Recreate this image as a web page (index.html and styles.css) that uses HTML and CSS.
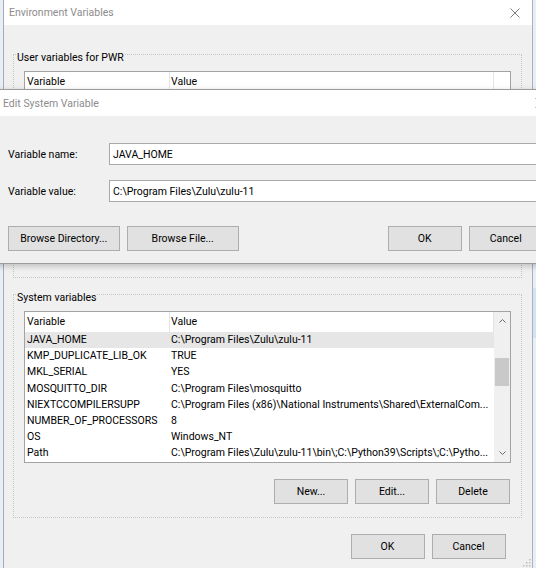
FILE: index.html
```html
<!DOCTYPE html>
<html lang="en">
<head>
<meta charset="utf-8">
<title>Environment Variables</title>
<link rel="stylesheet" href="styles.css">
</head>
<body>
<div class="desktop">
  <div class="side-block"></div>
  <section class="win env">
    <header class="titlebar">
      <span class="title">Environment Variables</span>
      <svg class="close" width="10" height="10" viewBox="0 0 10 10"><path d="M0.5 0.5 L9.5 9.5 M9.5 0.5 L0.5 9.5" stroke="#7a7a7a" stroke-width="1" fill="none"/></svg>
    </header>
    <div class="client">
      <fieldset class="group user-group">
        <legend>User variables for PWR</legend>
        <div class="list user-list">
          <div class="rows">
            <div class="list-head"><span class="c1">Variable</span><span class="c2">Value</span></div>
          </div>
        </div>
        <div class="btn-row">
          <button class="btn">New...</button><button class="btn">Edit...</button><button class="btn">Delete</button>
        </div>
      </fieldset>
      <fieldset class="group sys-group">
        <legend>System variables</legend>
        <div class="list sys-list">
          <div class="rows">
            <div class="list-head"><span class="c1">Variable</span><span class="c2">Value</span></div>
            <div class="row sel"><span class="c1">JAVA_HOME</span><span class="c2">C:\Program Files\Zulu\zulu-11</span></div>
            <div class="row"><span class="c1">KMP_DUPLICATE_LIB_OK</span><span class="c2">TRUE</span></div>
            <div class="row"><span class="c1">MKL_SERIAL</span><span class="c2">YES</span></div>
            <div class="row"><span class="c1">MOSQUITTO_DIR</span><span class="c2">C:\Program Files\mosquitto</span></div>
            <div class="row"><span class="c1">NIEXTCCOMPILERSUPP</span><span class="c2">C:\Program Files (x86)\National Instruments\Shared\ExternalCom...</span></div>
            <div class="row"><span class="c1">NUMBER_OF_PROCESSORS</span><span class="c2">8</span></div>
            <div class="row"><span class="c1">OS</span><span class="c2">Windows_NT</span></div>
            <div class="row"><span class="c1">Path</span><span class="c2">C:\Program Files\Zulu\zulu-11\bin\;C:\Python39\Scripts\;C:\Pytho...</span></div>
          </div>
          <div class="vscroll">
            <div class="sb-arrow"><svg width="7" height="4" viewBox="0 0 7 4"><polyline points="0.5,3.5 3.5,0.5 6.5,3.5" fill="none" stroke="#6a6a6a" stroke-width="1"/></svg></div>
            <div class="sb-track"><div class="sb-thumb"></div></div>
            <div class="sb-arrow"><svg width="7" height="4" viewBox="0 0 7 4"><polyline points="0.5,0.5 3.5,3.5 6.5,0.5" fill="none" stroke="#6a6a6a" stroke-width="1"/></svg></div>
          </div>
        </div>
        <div class="btn-row">
          <button class="btn">New...</button><button class="btn">Edit...</button><button class="btn">Delete</button>
        </div>
      </fieldset>
      <div class="btn-row dialog-btns">
        <button class="btn">OK</button><button class="btn">Cancel</button>
      </div>
    </div>
    <svg class="grip" width="8" height="8" viewBox="0 0 8 8">
      <rect x="6" y="0" width="1.5" height="1.5" fill="#bdbdbd"/>
      <rect x="3" y="3" width="1.5" height="1.5" fill="#bdbdbd"/>
      <rect x="6" y="3" width="1.5" height="1.5" fill="#bdbdbd"/>
      <rect x="0" y="6" width="1.5" height="1.5" fill="#bdbdbd"/>
      <rect x="3" y="6" width="1.5" height="1.5" fill="#bdbdbd"/>
      <rect x="6" y="6" width="1.5" height="1.5" fill="#bdbdbd"/>
    </svg>
  </section>

  <section class="win edit">
    <header class="titlebar">
      <span class="title">Edit System Variable</span>
      <svg class="close" width="10" height="10" viewBox="0 0 10 10"><path d="M0.5 0.5 L9.5 9.5 M9.5 0.5 L0.5 9.5" stroke="#7a7a7a" stroke-width="1" fill="none"/></svg>
    </header>
    <div class="form">
      <div class="field">
        <label for="vname">Variable name:</label>
        <input id="vname" class="input" type="text" value="JAVA_HOME">
      </div>
      <div class="field">
        <label for="vvalue">Variable value:</label>
        <input id="vvalue" class="input" type="text" value="C:\Program Files\Zulu\zulu-11">
      </div>
      <div class="edit-btns">
        <div class="grp">
          <button class="btn wide">Browse Directory...</button>
          <button class="btn wide">Browse File...</button>
        </div>
        <div class="grp r">
          <button class="btn">OK</button>
          <button class="btn">Cancel</button>
        </div>
      </div>
    </div>
  </section>
</div>
</body>
</html>
```

FILE: styles.css
```css
* { box-sizing: border-box; }
html, body { margin: 0; padding: 0; }
body {
  background: #e6ecf2;
  font-family: Roboto, "Noto Sans", "Liberation Sans", sans-serif;
  font-size: 10.5px;
  color: #000;
}
.desktop {
  position: relative;
  width: 536px;
  height: 568px;
  overflow: hidden;
  background: #e9eef3;
}
.side-block {
  position: absolute;
  left: 533px;
  top: 288px;
  width: 3px;
  height: 50px;
  background: #d3e3f3;
}
.win { position: absolute; }

/* Environment Variables window */
.env {
  left: 3px;
  top: 0;
  width: 530px;
  height: 568px;
  background: #f0f0f0;
  border-left: 1px solid #a0adbc;
  border-right: 1px solid #a7b3c1;
  display: flex;
  flex-direction: column;
}
.titlebar {
  flex: none;
  display: flex;
  align-items: center;
  justify-content: space-between;
  background: #fff;
}
.env .titlebar { height: 25px; padding: 0 12px 0 5px; }
.title { color: #8c8c8c; white-space: nowrap; }
.close { display: block; flex: none; }

.client {
  flex: 1;
  display: flex;
  flex-direction: column;
  padding: 0 10px 0 9px;
}
.group {
  margin: 0;
  padding: 0 10px;
  border: 1px dotted #c4c4c4;
  min-width: 0;
}
.group legend {
  margin-left: -8px;
  padding: 7px 1px 0;
  line-height: 14px;
}
.user-group { margin-top: 19px; padding-bottom: 23px; }
.sys-group { margin-top: 6px; padding-bottom: 13px; }

.list {
  margin-top: 6px;
  border: 1px solid #a3a3a3;
  background: #fff;
  display: flex;
}
.user-list { height: 142px; }
.rows { flex: 1; min-width: 0; }
.list-head, .row { display: flex; white-space: nowrap; }
.list-head { height: 20px; line-height: 20px; }
.row { height: 16.2px; line-height: 16.2px; }
.row.sel { background: #e6e6e6; }
.c1 { flex: none; width: 145px; padding-left: 2px; overflow: hidden; }
.c2 { flex: 1; min-width: 0; padding-left: 1px; overflow: hidden; }
.list-head .c1, .list-head .c2 { border-right: 1px solid #e5e5e5; }
.user-list .list-head .c2 { flex: none; width: 324px; }

.vscroll {
  flex: none;
  width: 16px;
  background: #f0f0f0;
  display: flex;
  flex-direction: column;
}
.sb-arrow {
  flex: none;
  height: 17px;
  display: flex;
  align-items: center;
  justify-content: center;
}
.sb-arrow svg { display: block; }
.sb-track { flex: 1; }
.sb-thumb {
  margin: 28.7px 1px 0;
  height: 28.3px;
  background: #c9c9c9;
}

.btn-row { display: flex; justify-content: flex-end; gap: 7px; }
.group .btn-row { margin-top: 16px; padding-right: 1px; }
.dialog-btns { margin-top: 16px; margin-right: 16.5px; }
.btn {
  width: 74px;
  height: 25px;
  margin: 0;
  padding: 0;
  border: 1px solid #adadad;
  background: #e1e1e1;
  font: inherit;
  color: #000;
}
.grip { position: absolute; right: 1px; bottom: 1px; }

/* Edit System Variable dialog */
.edit {
  left: -5px;
  top: 89px;
  width: 570px;
  background: #f0f0f0;
  border: 1px solid #9c9c9c;
  box-shadow: 0 2px 6px rgba(0, 0, 0, 0.22);
}
.edit .titlebar { height: 26px; padding: 0 19px 0 7px; }
.form { padding: 27px 21px 12px 12px; }
.field { display: flex; align-items: center; }
.field + .field { margin-top: 15px; }
.field label { flex: none; width: 101px; }
.input {
  flex: 1;
  min-width: 0;
  height: 22px;
  margin: 0;
  padding: 0 3px;
  border: 1px solid #a9a9a9;
  background: #fff;
  font: inherit;
  color: #000;
  outline: none;
}
.edit-btns {
  display: flex;
  justify-content: space-between;
  margin-top: 24px;
}
.edit-btns .grp { display: flex; gap: 7.5px; }
.edit-btns .grp.r { gap: 6.5px; }
.btn.wide { width: 111.5px; }
.edit-btns .grp.r .btn { width: 74.5px; }
```
